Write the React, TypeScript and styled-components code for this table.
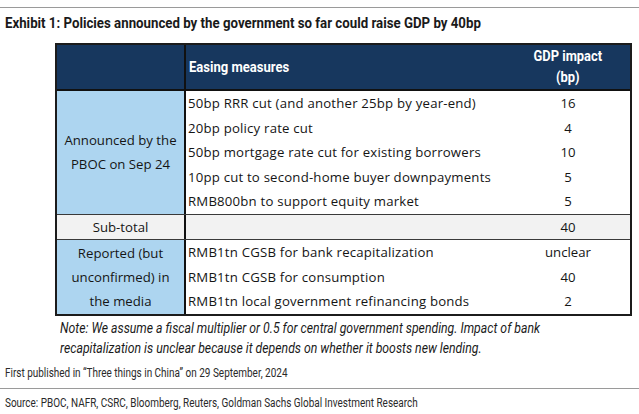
import React from "react";
import styled, { createGlobalStyle } from "styled-components";

const Global = createGlobalStyle`
  html, body { margin: 0; padding: 0; background: #ffffff; }
  body { width: 639px; height: 414px; overflow: hidden; }
`;

const narrow = `"Roboto", "Liberation Sans", sans-serif`;
const bodyFont = `"Open Sans", "Noto Sans", sans-serif`;

const Page = styled.div`
  display: flex;
  flex-direction: column;
  padding-top: 7px;
`;

const Rule = styled.div`
  height: 1px;
  background: #9a9a9a;
`;

/* condensed face emulation: the reference uses a condensed grotesque */
const Squeeze = styled.span<{ $k: number; $origin?: string }>`
  display: inline-block;
  white-space: nowrap;
  transform: scaleX(${(p) => p.$k});
  transform-origin: ${(p) => p.$origin ?? "left"} center;
`;

const Title = styled.h1`
  margin: 0;
  padding: 6px 0 0 5px;
  height: 18px;
  font-family: ${narrow};
  font-weight: 700;
  font-size: 15.5px;
  line-height: 18px;
  color: #1a1a1a;
`;

const TableWrap = styled.div`
  padding: 11px 0 0 55px;
`;

const Table = styled.div`
  width: 577px;
  box-sizing: border-box;
  border: 2px solid #1c1c1c;
  display: grid;
  grid-template-columns: 129px 1fr 124px;
  font-family: ${bodyFont};
  font-size: 13.2px;
  color: #151515;
`;

const HeadCell = styled.div<{ $align?: "left" | "center"; $first?: boolean }>`
  background: #17375e;
  color: #ffffff;
  height: 44px;
  border-bottom: 2px solid #111;
  ${(p) => (p.$first ? "border-right: 2px solid #111;" : "")}
  display: flex;
  flex-direction: column;
  justify-content: center;
  align-items: ${(p) => (p.$align === "center" ? "center" : "flex-start")};
  padding-left: ${(p) => (p.$align === "center" ? "0" : "3px")};
  font-family: ${narrow};
  font-weight: 700;
  font-size: 15px;
  line-height: 21px;
`;

const GroupLabel = styled.div<{ $rows: number; $bg: string }>`
  grid-column: 1;
  grid-row: span ${(p) => p.$rows};
  background: ${(p) => p.$bg};
  border-right: 2px solid #111;
  display: flex;
  align-items: center;
  justify-content: center;
  text-align: center;
  line-height: 24px;
  padding: 0 2px;
  white-space: nowrap;
`;

const Measure = styled.div`
  grid-column: 2;
  height: 24.6px;
  line-height: 24.6px;
  padding-left: 2px;
  white-space: nowrap;
  letter-spacing: 0.2px;
`;

const Impact = styled.div`
  grid-column: 3;
  height: 24.6px;
  line-height: 24.6px;
  text-align: center;
`;

const SubRow = styled.div`
  grid-column: 1 / -1;
  display: grid;
  grid-template-columns: 129px 1fr 124px;
  background: #f2f2f2;
  border-top: 1px solid #3a3a3a;
  border-bottom: 1px solid #3a3a3a;
  height: 24px;
  line-height: 24px;
`;

const SubLabel = styled.div`
  border-right: 2px solid #111;
  text-align: center;
`;

const SubValue = styled.div`
  text-align: center;
`;

const Note = styled.div`
  display: flex;
  flex-direction: column;
  padding: 3px 0 0 60px;
  font-family: ${narrow};
  font-style: italic;
  font-size: 14.5px;
  line-height: 20px;
  color: #1a1a1a;
`;

const Small = styled.div`
  padding-left: 5px;
  font-family: ${narrow};
  font-size: 12px;
  line-height: 14px;
  color: #2a2a2a;
`;

const Published = styled(Small)`
  padding-top: 7px;
  padding-bottom: 8px;
`;

const Source = styled(Small)`
  padding-top: 7px;
`;

const group1 = [
  ["50bp RRR cut (and another 25bp by year-end)", "16"],
  ["20bp policy rate cut", "4"],
  ["50bp mortgage rate cut for existing borrowers", "10"],
  ["10pp cut to second-home buyer downpayments", "5"],
  ["RMB800bn to support equity market", "5"],
];

const group2 = [
  ["RMB1tn CGSB for bank recapitalization", "unclear"],
  ["RMB1tn CGSB for consumption", "40"],
  ["RMB1tn local government refinancing bonds", "2"],
];

export default function App() {
  return (
    <Page>
      <Global />
      <Rule />
      <Title>
        <Squeeze $k={0.855}>
          Exhibit 1: Policies announced by the government so far could raise GDP by 40bp
        </Squeeze>
      </Title>
      <TableWrap>
        <Table>
          <HeadCell $first />
          <HeadCell>
            <Squeeze $k={0.87}>Easing measures</Squeeze>
          </HeadCell>
          <HeadCell $align="center">
            <Squeeze $k={0.86} $origin="center">GDP impact</Squeeze>
            <Squeeze $k={0.86} $origin="center">(bp)</Squeeze>
          </HeadCell>

          <GroupLabel $rows={5} $bg="#add5f0">
            Announced by the
            <br />
            PBOC on Sep 24
          </GroupLabel>
          {group1.map(([m, v]) => (
            <React.Fragment key={m}>
              <Measure>{m}</Measure>
              <Impact>{v}</Impact>
            </React.Fragment>
          ))}

          <SubRow>
            <SubLabel>Sub-total</SubLabel>
            <div />
            <SubValue>40</SubValue>
          </SubRow>

          <GroupLabel $rows={3} $bg="#add5f0">
            Reported (but
            <br />
            unconfirmed) in
            <br />
            the media
          </GroupLabel>
          {group2.map(([m, v]) => (
            <React.Fragment key={m}>
              <Measure>{m}</Measure>
              <Impact>{v}</Impact>
            </React.Fragment>
          ))}
        </Table>
      </TableWrap>
      <Note>
        <Squeeze $k={0.845}>
          Note: We assume a fiscal multiplier or 0.5 for central government spending. Impact of bank
        </Squeeze>
        <Squeeze $k={0.845}>
          recapitalization is unclear because it depends on whether it boosts new lending.
        </Squeeze>
      </Note>
      <Published>
        <Squeeze $k={0.83}>First published in “Three things in China” on 29 September, 2024</Squeeze>
      </Published>
      <Rule />
      <Source>
        <Squeeze $k={0.83}>
          Source: PBOC, NAFR, CSRC, Bloomberg, Reuters, Goldman Sachs Global Investment Research
        </Squeeze>
      </Source>
    </Page>
  );
}
